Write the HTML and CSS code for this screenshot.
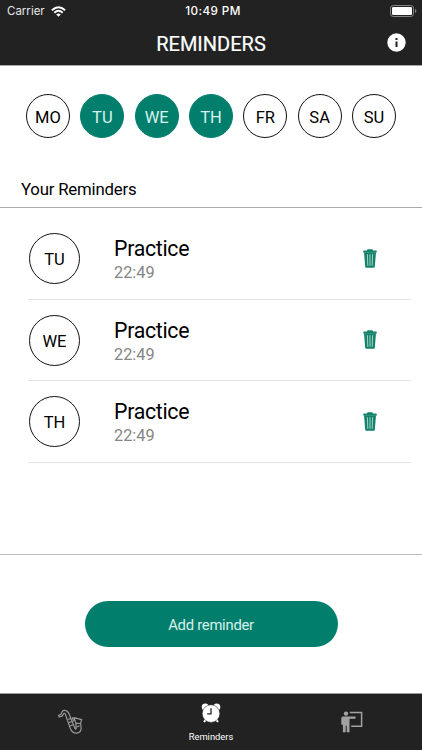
FILE: index.html
```html
<!DOCTYPE html>
<html lang="en">
<head>
<meta charset="utf-8">
<title>Reminders</title>
<link rel="stylesheet" href="styles.css">
</head>
<body>
<svg class="defs" width="0" height="0" aria-hidden="true">
  <symbol id="trash" viewBox="0 0 14 19">
    <path d="M4 1.4Q4 .3 5 .3h4q1 0 1 1.1h3q.8 0 .8.9v1.2H.2V2.3q0-.9.8-.9z" fill="#15836c"/>
    <path d="M1 3.2h12l-1.2 14.6q-.1.9-1 .9H3.2q-.9 0-1-.9z" fill="#15836c"/>
    <path d="M4.4 5.2l.4 11.6M7 5.2v11.6M9.6 5.2l-.4 11.6" stroke="#b4ddd3" stroke-width=".9"/>
  </symbol>
</svg>
<div class="app">
  <header class="header">
    <div class="status">
      <div class="carrier"><span>Carrier</span>
        <svg width="15" height="11" viewBox="0 0 15 11"><g fill="none" stroke="#fff" stroke-width="1.9"><path d="M.9 4.2Q7.5-1.7 14.1 4.2"/><path d="M3.3 6.7Q7.5 3 11.7 6.7"/></g><path d="M5.2 8.4Q7.5 6.5 9.8 8.4L7.5 10.8z" fill="#fff"/></svg>
      </div>
      <div class="clock">10:49 PM</div>
      <svg class="battery" width="27" height="12" viewBox="0 0 27 12"><rect x=".5" y=".5" width="23" height="11" rx="2.8" fill="none" stroke="#858585"/><rect x="2" y="2" width="20" height="8" rx="1.3" fill="#fff"/><path d="M25 4q1.4.6 1.4 2T25 8z" fill="#858585"/></svg>
    </div>
    <div class="nav">
      <h1>REMINDERS</h1>
      <svg class="info" width="19" height="19" viewBox="0 0 19 19"><circle cx="9.5" cy="9.5" r="9.2" fill="#fff"/><path d="M8.5 4.9h2v2h-2zM8.5 8.5h2v5.6h-2z" fill="#222"/></svg>
    </div>
  </header>
  <section class="days">
    <div class="day">MO</div><div class="day on">TU</div><div class="day on">WE</div><div class="day on">TH</div><div class="day">FR</div><div class="day">SA</div><div class="day">SU</div>
  </section>
  <h2>Your Reminders</h2>
  <main class="list">
    <div class="row"><div class="badge">TU</div><div class="text"><div class="name">Practice</div><div class="time">22:49</div></div><svg class="trash"><use href="#trash"/></svg></div>
    <div class="row"><div class="badge">WE</div><div class="text"><div class="name">Practice</div><div class="time">22:49</div></div><svg class="trash"><use href="#trash"/></svg></div>
    <div class="row"><div class="badge">TH</div><div class="text"><div class="name">Practice</div><div class="time">22:49</div></div><svg class="trash"><use href="#trash"/></svg></div>
  </main>
  <div class="action"><button>Add reminder</button></div>
  <nav class="tabs">
    <div class="tab">
      <svg width="26" height="26" viewBox="0 0 26 26" fill="none" stroke="#999" stroke-width="1.2" stroke-linejoin="round" stroke-linecap="round"><path d="M1.6 6.4L2.2 8l2.9-.9 1.6-2.6q1.1-.8 1.7.9l4.9 14.1q2 5 6.7 4.6 4.2-.6 4.1-5.1l-.5-4.7 1.1-3.7-8-1.9 2 4.8.6 5.6q-.3 1.9-1.4.2L12.2 5.2Q10.3 1 6.8 1.4 5.2 1.8 4.5 3.9l-.7 1.6z"/><path d="M15.4 8.9l1.3 3M11.5 10.2l1.9-.6M12.6 13.4l1.9-.6M13.7 16.6l1.9-.6M19.1 14.4l4 .1M20.3 17.6l2-.6"/></svg>
    </div>
    <div class="tab active">
      <svg width="20" height="20" viewBox="0 0 20 20"><g fill="#fff"><circle cx="4.3" cy="4" r="3.6"/><circle cx="15.7" cy="4" r="3.6"/><path d="M4 15.5l-1.7 3 1.2 1 3-2.6zM16 15.5l1.7 3-1.2 1-3-2.6z"/></g><circle cx="10" cy="10.6" r="8.8" fill="#fff" stroke="#222" stroke-width=".5"/><path d="M10 5.3v5.6H6.2" fill="none" stroke="#222" stroke-width="1.3"/></svg>
      <span>Reminders</span>
    </div>
    <div class="tab">
      <svg width="22" height="22" viewBox="0 0 22 22"><g fill="#a3a3a3"><circle cx="5" cy="2.6" r="2.2"/><path d="M2 5.5h11.8q1 0 1 1.1t-1 1.1H8.5v13.5H5.7v-6.5h-1v6.5H1.9v-7.5H.3V7.2q0-1.7 1.7-1.7z"/></g><path d="M8.8 1.4h11.8v13.8H10.2" fill="none" stroke="#a3a3a3" stroke-width="1.5"/></svg>
    </div>
  </nav>
</div>
</body>
</html>
```
FILE: styles.css
```css
* { box-sizing: border-box; }
body { margin: 0; background: #fff; color: #000; font-family: Roboto, sans-serif; }
.defs { position: absolute; }
.app { width: 422px; height: 750px; display: flex; flex-direction: column; overflow: hidden; }
.header { height: 66px; flex: none; background: #222; color: #fff; border-bottom: 1px solid #a8a8a8; }
.status { height: 22px; display: grid; grid-template-columns: 1fr auto 1fr; align-items: center; padding: 0 5px 0 7px; font: 11.5px Inter, sans-serif; }
.carrier { display: flex; align-items: center; gap: 6px; color: #e8e8e8; }
.clock { font-weight: 500; font-size: 11.7px; letter-spacing: .4px; padding-left: 2px; }
.battery { justify-self: end; margin-top: -1px; }
.nav { height: 43px; display: grid; grid-template-columns: 1fr auto 1fr; align-items: center; padding-right: 16px; padding-left: 16px; }
h1 { grid-column: 2; margin: 0; font-size: 20px; font-weight: 400; line-height: 24px; -webkit-text-stroke: .2px #fff; }
.info { justify-self: end; margin-top: -3px; }
.days { flex: none; display: flex; justify-content: space-between; padding: 28px 26px 0; }
.day, .badge { border: 1px solid #111; border-radius: 50%; display: flex; align-items: center; justify-content: center; font-size: 16.5px; }
.day { width: 44px; height: 44px; padding-top: 2px; }
.day.on { background: #027f6c; border-color: #027f6c; color: #d9f0ec; }
h2 { flex: none; height: 70px; margin: 0; padding: 41px 21px 0; border-bottom: 1px solid #ababab; font-size: 16.8px; letter-spacing: -.2px; line-height: 21px; font-weight: 400; }
.list { height: 347px; flex: none; padding: 10px 11px 0 28px; border-bottom: 1px solid #bbb; }
.row { height: 81.5px; display: flex; align-items: center; border-bottom: 1px solid #e4e4e4; padding-left: 1px; }
.badge { width: 51px; height: 51px; margin-top: 1px; padding-top: 2px; }
.text { margin: 5px auto 0 34px; }
.name { font-size: 21.3px; letter-spacing: -.3px; line-height: 25px; }
.time { font-size: 16.3px; line-height: 24px; color: #858585; }
.trash { width: 14px; height: 19px; margin-right: 34px; }
.action { flex: 1; display: flex; justify-content: center; align-items: flex-start; padding-top: 46px; }
button { width: 253px; height: 46px; border: 0; border-radius: 23px; background: #027f6c; color: #d9f0ec; font: 14.8px Roboto, sans-serif; letter-spacing: -.25px; padding-top: 3px; }
.tabs { height: 57px; flex: none; display: grid; grid-template-columns: repeat(3, 1fr); background: #222; border-top: 1px solid #999; }
.tab { display: flex; flex-direction: column; align-items: center; justify-content: center; }
.active { justify-content: flex-start; padding-top: 9px; color: #fff; font-size: 9.4px; line-height: 14px; gap: 7px; }
```
